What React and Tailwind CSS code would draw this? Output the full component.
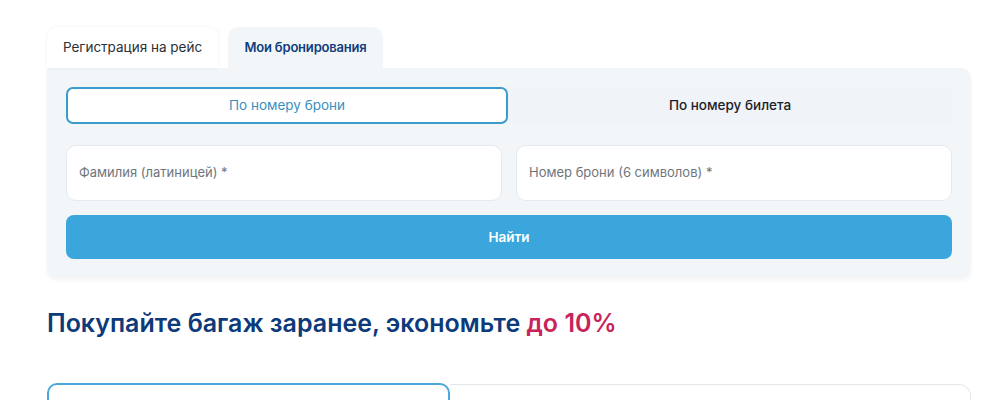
export default function App() {
  return (
    <div className="w-[1000px] h-[400px] overflow-hidden bg-white" style={{ fontFamily: 'Inter, "Noto Sans", sans-serif' }}>
      <div className="pl-[47px] pr-[29px] pt-[27px]">
        <div className="flex items-end gap-[10px]">
          <div className="w-[171px] h-[41px] bg-white rounded-t-[10px] shadow-[0_0_4px_rgba(0,0,0,0.06)] flex items-center justify-center text-[13.5px] text-[#2b2f36]">
            Регистрация на рейс
          </div>
          <div className="w-[155px] h-[41px] bg-[#f3f6f9] rounded-t-[10px] flex items-center justify-center text-[13px] font-semibold text-[#0f3d7d] tracking-[-0.2px]">
            Мои бронирования
          </div>
        </div>
        <div className="bg-[#f3f6f9] rounded-b-[10px] rounded-tr-[10px] shadow-[0_2px_4px_rgba(0,0,0,0.05)] pt-[19px] pb-[19px] px-[19px] flex flex-col">
          <div className="flex h-[37px] bg-[#f0f3f7] rounded-[8px]">
            <div className="w-[442px] border-2 border-[#3a9ccd] bg-white rounded-[7px] flex items-center justify-center text-[13.5px] text-[#3a8fbf]">
              По номеру брони
            </div>
            <div className="flex-1 flex items-center justify-center text-[13.5px] font-medium text-[#1d2127]">
              По номеру билета
            </div>
          </div>
          <div className="flex gap-[14px] mt-[21px]">
            <div className="flex-1 h-[56px] bg-white rounded-[10px] border border-[#e6eaef] flex items-center px-[12px] text-[13px] text-[#6f757d]">
              Фамилия (латиницей) *
            </div>
            <div className="flex-1 h-[56px] bg-white rounded-[10px] border border-[#e6eaef] flex items-center px-[12px] text-[13px] text-[#6f757d]">
              Номер брони (6 символов) *
            </div>
          </div>
          <button className="mt-[14px] h-[44px] bg-[#3aa6dc] rounded-[8px] text-white text-[13.5px] font-semibold flex items-center justify-center">
            Найти
          </button>
        </div>
        <h2 className="mt-[28px] text-[25px] font-semibold leading-[34px] text-[#0d3a7a]">
          Покупайте багаж заранее, экономьте <span className="text-[#c9245a]">до 10%</span>
        </h2>
        <div className="mt-[43px] flex h-[40px]">
          <div className="w-[403px] border-2 border-[#4aa9d8] rounded-t-[10px] bg-white"></div>
          <div className="flex-1 border border-[#e4e8ec] border-l-0 rounded-tr-[12px] mt-[1px]"></div>
        </div>
      </div>
    </div>
  );
}
